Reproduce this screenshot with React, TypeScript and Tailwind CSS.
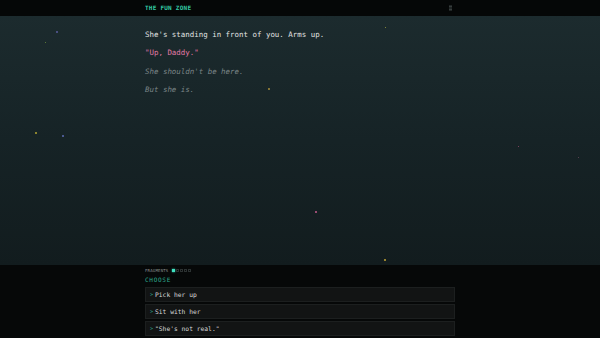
import React from 'react';

const mono = { fontFamily: '"DejaVu Sans Mono", "Liberation Mono", monospace' };

const specks = [
  { x: 56, y: 15, c: '#5a5c9e', w: 2 },
  { x: 45, y: 26, c: '#6f8f3c', w: 1 },
  { x: 385, y: 11, c: '#a3a23e', w: 1 },
  { x: 268, y: 72, c: '#a88f3a', w: 2 },
  { x: 35, y: 116, c: '#b3a532', w: 2 },
  { x: 62, y: 119, c: '#5e6cb4', w: 2 },
  { x: 518, y: 130, c: '#9a4c6c', w: 1 },
  { x: 578, y: 141, c: '#6b4a5c', w: 1 },
  { x: 315, y: 195, c: '#c45c8d', w: 2 },
  { x: 384, y: 243, c: '#c4a434', w: 2 },
];

const choices = ['Pick her up', 'Sit with her', '"She\'s not real."'];

export default function App() {
  return (
    <div className="h-[338px] w-[600px] flex flex-col bg-[#060808] overflow-hidden" style={mono}>
      {/* header */}
      <header className="h-4 shrink-0 bg-[#050707]">
        <div className="w-[310px] mx-auto h-full flex items-center justify-between">
          <span className="text-[6px] leading-none font-bold tracking-[0.04em] text-[#34c9a4]">THE FUN ZONE</span>
          <svg width="3" height="6" viewBox="0 0 3 6" className="mr-[3px]">
            <rect x="0" y="0" width="3" height="6" fill="#202525" />
            <rect x="0" y="1" width="3" height="1" fill="#363c3c" />
            <rect x="0" y="4" width="3" height="1" fill="#363c3c" />
          </svg>
        </div>
      </header>

      {/* story */}
      <main className="relative flex-1 bg-gradient-to-b from-[#1c2b2e] via-[#162326] to-[#121c1e]">
        {specks.map((s, i) => (
          <span
            key={i}
            className="absolute rounded-[1px]"
            style={{ left: s.x, top: s.y, width: s.w, height: s.w === 2 ? 1.5 : 1, background: s.c }}
          />
        ))}
        <div className="relative w-[310px] mx-auto pt-[9.5px] text-[7.45px] leading-[18.5px]">
          <p className="text-[#e0e2e2]">She's standing in front of you. Arms up.</p>
          <p className="text-[#e27aa6]">"Up, Daddy."</p>
          <p className="italic text-[#7b8587]">She shouldn't be here.</p>
          <p className="italic text-[#7b8587]">But she is.</p>
        </div>
      </main>

      {/* choices */}
      <section className="h-[73px] shrink-0 bg-[#060808]">
        <div className="w-[310px] mx-auto pt-[3px]">
          <div className="h-[5px] flex items-center">
            <span className="text-[4px] leading-none tracking-[0.05em] text-[#8a8f8f]">FRAGMENTS</span>
            <div className="ml-[4px] flex gap-[1px]">
              <span className="w-[3px] h-[3px] bg-[#3fe0c0] shadow-[0_0_2px_#3fe0c0]" />
              {[0, 1, 2, 3].map((i) => (
                <span key={i} className="w-[3px] h-[3px] border-[0.5px] border-[#2b3131]" />
              ))}
            </div>
          </div>
          <div className="mt-[3px] h-[8px] leading-[8px] text-[6px] tracking-[0.12em] text-[#2ea98c]">CHOOSE</div>
          <div className="mt-[3px] flex flex-col gap-[2px]">
            {choices.map((c) => (
              <button
                key={c}
                className="h-[15px] w-full flex items-center gap-[2px] px-[4px] bg-[#121414] border border-[#1c1f1f] text-left text-[6.3px] text-[#d6d8d8]"
              >
                <span className="text-[#2ea98c] text-[5px]">&gt;</span>
                <span>{c}</span>
              </button>
            ))}
          </div>
        </div>
      </section>
    </div>
  );
}
